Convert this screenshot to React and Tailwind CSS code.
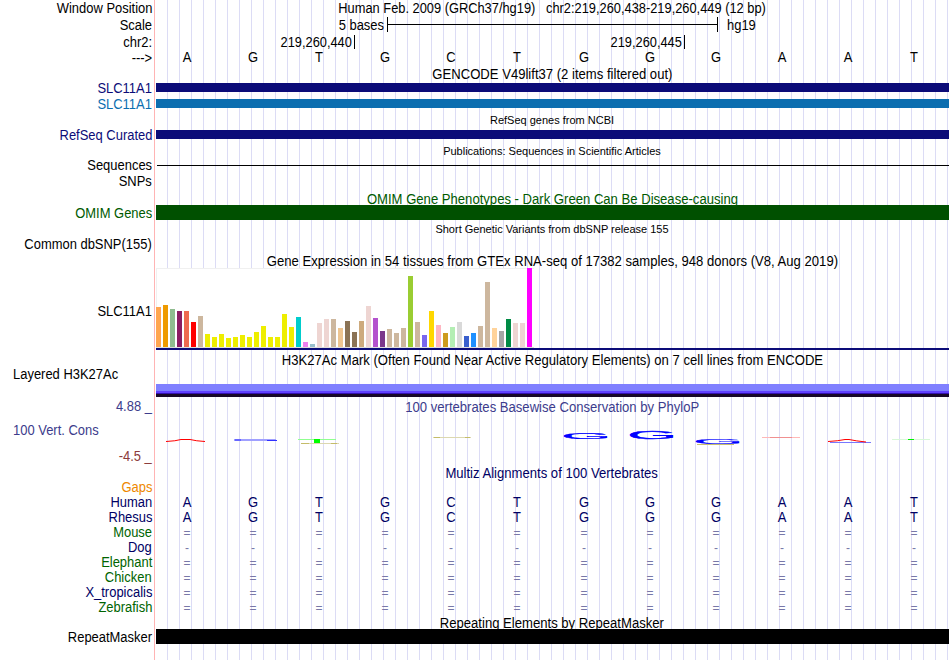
import React from 'react';

const BASES = ['A', 'G', 'T', 'G', 'C', 'T', 'G', 'G', 'G', 'A', 'A', 'T'];

// GTEx tissues: [bar height, colour]
const TISSUES = [
  [40, '#ffa54f'], [42, '#ee9a00'], [38, '#8fbc8f'], [36, '#8b1c62'], [36, '#ee6a50'], [25, '#ff0000'],
  [31, '#cdb79e'], [13, '#eeee00'], [10, '#eeee00'], [13, '#eeee00'], [9, '#eeee00'], [10, '#eeee00'],
  [12, '#eeee00'], [10, '#eeee00'], [15, '#eeee00'], [21, '#eeee00'], [10, '#eeee00'], [10, '#eeee00'],
  [33, '#eeee00'], [20, '#eeee00'], [30, '#00cdcd'], [5, '#ee82ee'], [3, '#9ac0cd'], [24, '#eed5d2'],
  [28, '#eed5d2'], [28, '#cdb79e'], [19, '#eec591'], [26, '#8b7355'], [15, '#8b7355'], [26, '#cdaa7d'],
  [41, '#eed5d2'], [29, '#b452cd'], [16, '#7a378b'], [18, '#cdb79e'], [14, '#cdb79e'], [19, '#cdb79e'],
  [71, '#9acd32'], [25, '#cdb79e'], [12, '#7a67ee'], [36, '#ffd700'], [22, '#ffb6c1'], [14, '#cd9b1d'],
  [20, '#b4eeb4'], [25, '#d9d9d9'], [11, '#3a5fcd'], [14, '#1e90ff'], [21, '#cdb79e'], [65, '#cdb79e'],
  [19, '#ffd39b'], [16, '#a6a6a6'], [28, '#008b45'], [24, '#eed5d2'], [24, '#eed5d2'], [79, '#ff00ff'],
];

const SPECIES = [
  { name: 'Human', color: 'text-[#000064]', bases: true },
  { name: 'Rhesus', color: 'text-[#000064]', bases: true },
  { name: 'Mouse', color: 'text-[#006400]', mark: '=' },
  { name: 'Dog', color: 'text-[#000064]', mark: '-' },
  { name: 'Elephant', color: 'text-[#006400]', mark: '=' },
  { name: 'Chicken', color: 'text-[#006400]', mark: '=' },
  { name: 'X_tropicalis', color: 'text-[#000064]', mark: '=' },
  { name: 'Zebrafish', color: 'text-[#006400]', mark: '=' },
];

// One line of the browser: label on the left, track data on the right
function Row({ label, height, color = 'text-black', pad = 'pb-[2px]', left = false, children }) {
  return (
    <div className={`flex shrink-0 ${height}`}>
      <div className={`flex w-[154px] shrink-0 items-center whitespace-pre ${left ? 'pl-[13px]' : 'justify-end pr-[2px]'} ${pad} ${color}`}>
        <span className={left ? 'origin-left scale-x-[0.925]' : 'origin-right scale-x-[0.925]'}>{label}</span>
      </div>
      <div className="flex min-w-0 flex-1 flex-col pl-[2px]">{children}</div>
    </div>
  );
}

function Title({ height, className = '', small = false, children }) {
  return (
    <div className={`ml-[154px] flex shrink-0 items-center justify-center whitespace-pre pl-px ${height} ${className}`}>
      <span className={small ? 'text-[11px]' : 'scale-x-[0.935]'}>{children}</span>
    </div>
  );
}

function Letters({ items, className = '' }) {
  return (
    <div className={`-ml-[2px] grid h-full w-[793px] grid-cols-12 items-center text-center ${className}`}>
      {items.map((item, i) => (
        <span key={i} className="scale-x-[0.925]">{item}</span>
      ))}
    </div>
  );
}

// Wide, flattened G of the conservation logo
function LogoG({ x, y, sy }) {
  return (
    <text transform={`translate(${x} ${y}) scale(6.4 ${sy})`} fontSize="10" fill="#0000ff" stroke="#0000ff" strokeWidth="0.25">
      G
    </text>
  );
}

function ConservationLogo() {
  return (
    <svg className="block h-[50px] w-[793px]" viewBox="156 406 793 50" fill="none">
      <path d="M166 441.5Q176 441 181 439.5H190Q196 441 205 441.5" stroke="#ff0000" />
      <path d="M234 440H276" stroke="#a0a0ff" strokeWidth="2" />
      <path d="M235 440H241M267 440.5H277" stroke="#3030ff" />
      <path d="M298 439.5H336" stroke="#90ff90" />
      <path d="M301 443.5H339" stroke="#dcd8b0" />
      <path d="M301 443.5H309M331 443.5H337" stroke="#c4bc68" />
      <path d="M314 439H320V443H314Z" fill="#00ff00" />
      <path d="M433 437.5H471" stroke="#dcd8b0" />
      <path d="M434 437.5H440M465 437.5H470" stroke="#c4bc68" />
      <LogoG x={561.3} y={438.8} sy={0.9} />
      <LogoG x={627.3} y={438.8} sy={1.05} />
      <path d="M697 444.5H734" stroke="#c8c070" />
      <LogoG x={693.3} y={443.8} sy={0.65} />
      <path d="M762 437.5H800" stroke="#ffb8b8" />
      <path d="M770 437.5H792" stroke="#f09090" />
      <path d="M830 442.5H871" stroke="#7878ff" />
      <path d="M828 441.5Q838 441 845 439.5H849Q856 441 866 442" stroke="#ff0000" />
      <path d="M892 439.5H930" stroke="#d8f8d8" />
      <path d="M908 439.5H914" stroke="#00f000" />
    </svg>
  );
}

export default function App() {
  return (
    <div className="relative h-[660px] w-[950px] overflow-hidden bg-white font-['Liberation_Sans',Arial,sans-serif] text-[14px] leading-none text-black">
      {/* guide lines */}
      <div className="absolute inset-y-0 left-[154px] w-px bg-[#ffb4b4]" />
      <div className="absolute inset-y-0 left-[167px] right-px bg-[linear-gradient(to_right,#dcdcf5_1px,transparent_1px)] bg-[length:12px_100%]" />

      <div className="relative flex h-full w-[949px] flex-col">
        <Row label="Window Position" height="h-[16px]" pad="">
          <div className="flex h-full items-center justify-center whitespace-pre pb-px">
            <span className="scale-x-[0.917]">{'Human Feb. 2009 (GRCh37/hg19)   chr2:219,260,438-219,260,449 (12 bp)'}</span>
          </div>
        </Row>
        <Row label="Scale" height="h-[17px]" pad="">
          <div className="flex h-full items-center">
            <span className="w-[228px] origin-right scale-x-[0.925] text-right">5 bases</span>
            <div className="ml-[3px] flex h-[15px] w-[331px] items-center border-x border-black">
              <div className="h-px w-full bg-black" />
            </div>
            <span className="ml-[9px] origin-left scale-x-[0.925]">hg19</span>
          </div>
        </Row>
        <Row label="chr2:" height="h-[17px]" pad="pt-px">
          <div className="flex h-full items-center">
            <span className="flex h-[14px] w-[199px] items-center justify-end border-r border-black pr-[2px] pt-px">
              <span className="origin-right scale-x-[0.915]">219,260,440</span>
            </span>
            <span className="flex h-[14px] w-[330px] items-center justify-end border-r border-black pr-[2px] pt-px">
              <span className="origin-right scale-x-[0.915]">219,260,445</span>
            </span>
          </div>
        </Row>
        <Row label="--->" height="h-[16px]" pad="">
          <Letters items={BASES} className="pb-[2px]" />
        </Row>

        <Title height="h-[16px]" className="pb-px">GENCODE V49lift37 (2 items filtered out)</Title>
        <Row label="SLC11A1" height="h-[16px]" pad="pb-[4px]" color="text-[#0c0c78]">
          <div className="mt-px h-[9px] bg-[#0c0c78]" />
        </Row>
        <Row label="SLC11A1" height="h-[14px]" color="text-[#0c6eb0]">
          <div className="mt-px h-[9px] bg-[#0c6eb0]" />
        </Row>

        <Title height="h-[16px]" small>RefSeq genes from NCBI</Title>
        <Row label="RefSeq Curated" height="h-[15px]" color="text-[#0c0c78]">
          <div className="mt-[2px] h-[9px] bg-[#0c0c78]" />
        </Row>

        <Title height="h-[15px]" className="pt-[2px]" small>Publications: Sequences in Scientific Articles</Title>
        <Row label="Sequences" height="h-[16px]">
          <div className="ml-px mt-[7px] h-px bg-black" />
        </Row>
        <Row label="SNPs" height="h-[16px]" />

        <Title height="h-[15px]" className="pt-[2px] text-[#005a00]">OMIM Gene Phenotypes - Dark Green Can Be Disease-causing</Title>
        <Row label="OMIM Genes" height="h-[15px]" pad="" color="text-[#005a00]">
          <div className="h-full bg-[#005000]" />
        </Row>

        <Title height="h-[18px]" small>Short Genetic Variants from dbSNP release 155</Title>
        <Row label="Common dbSNP(155)" height="h-[14px]" pad="pb-[3px]" />

        <Title height="h-[16px]" className="pt-px">Gene Expression in 54 tissues from GTEx RNA-seq of 17382 samples, 948 donors (V8, Aug 2019)</Title>
        <Row label="SLC11A1" height="h-[82px]" pad="pt-[3px]">
          <div className="flex h-[80px] w-[378px] items-end gap-[2px] border-b border-[#dcdcdc] bg-white shadow-[inset_1px_1px_0_#f0f0f0]">
            {TISSUES.map(([height, color], i) => (
              <div key={i} className="w-[5px] shrink-0" style={{ height, backgroundColor: color }} />
            ))}
          </div>
          <div className="h-[2px] bg-[#0c0c78]" />
        </Row>

        <Title height="h-[18px]" className="pt-[2px]">H3K27Ac Mark (Often Found Near Active Regulatory Elements) on 7 cell lines from ENCODE</Title>
        <Row label="Layered H3K27Ac" height="h-[30px]" left pad="pb-[18px]">
          <div className="mt-[16px] h-[7px] bg-[#8080ff]" />
          <div className="h-[2px] bg-[#6040ff]" />
          <div className="h-px bg-[#3410b0]" />
          <div className="h-[3px] bg-[#180828]" />
        </Row>

        <Row label="4.88 _" height="h-[18px]" color="text-[#3c3c8c]" pad="pb-[3px]">
          <div className="flex h-full items-center justify-center whitespace-pre pb-px text-[#3c3c8c]">
            <span className="scale-x-[0.935]">100 vertebrates Basewise Conservation by PhyloP</span>
          </div>
        </Row>
        <Row label="100 Vert. Cons" height="h-[32px]" color="text-[#3c3c8c]" left pad="pb-[4px]">
          <div className="-mt-[10px] h-0">
            <ConservationLogo />
          </div>
        </Row>
        <Row label="-4.5 _" height="h-[17px]" color="text-[#8c3c3c]" />

        <Title height="h-[15px]" className="text-[#000064]">Multiz Alignments of 100 Vertebrates</Title>
        <Row label="Gaps" height="h-[15px]" color="text-[#ee8800]" />
        {SPECIES.map((s) => (
          <Row key={s.name} label={s.name} height="h-[15px]" color={s.color}>
            {s.bases ? (
              <Letters items={BASES} className="pb-[2px] text-[#000064]" />
            ) : (
              <Letters items={BASES.map(() => s.mark)} className="text-[13px] text-[#7878a8]" />
            )}
          </Row>
        ))}

        <Title height="h-[14px]" className="pt-px">Repeating Elements by RepeatMasker</Title>
        <Row label="RepeatMasker" height="h-[15px]" pad="">
          <div className="h-full bg-black" />
        </Row>
      </div>
    </div>
  );
}
